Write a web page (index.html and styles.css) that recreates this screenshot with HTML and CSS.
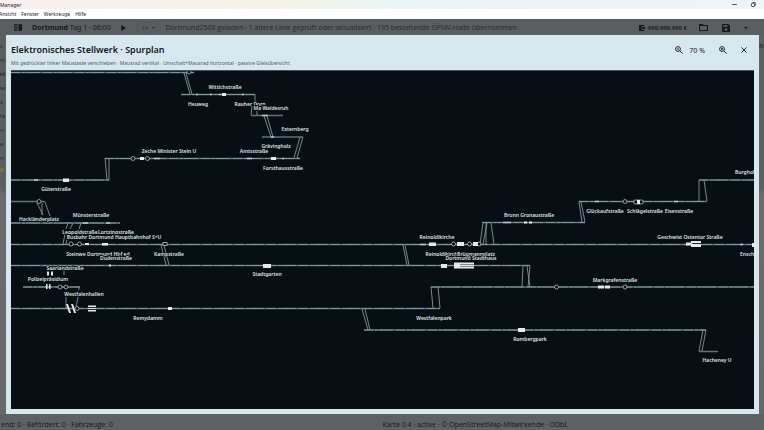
FILE: index.html
```html
<!DOCTYPE html>
<html lang="de">
<head>
  <meta charset="UTF-8" />
  <meta name="viewport" content="width=device-width, initial-scale=1.0" />
  <title>Manager</title>
  <link rel="stylesheet" href="styles.css">
</head>
<body>
  <header class="titlebar">
    <span class="app-name">Manager</span>
    <div class="window-buttons">
      <button type="button" aria-label="Minimieren">
        <svg width="5" height="5" viewBox="0 0 5 5"><path d="M0 2.5h5" /></svg>
      </button>
      <button type="button" aria-label="Wiederherstellen">
        <svg width="5" height="5" viewBox="0 0 5 5"><rect x="0.5" y="1.3" width="3" height="3.2" rx="0.6" /><path d="M1.6 0.5h2q1 0 1 1v2" /></svg>
      </button>
    </div>
  </header>

  <nav class="menubar">
    <a href="#">Ansicht</a>
    <a href="#">Fenster</a>
    <a href="#">Werkzeuge</a>
    <a href="#">Hilfe</a>
  </nav>

  <div class="app">
    <div class="toolbar">
      <button type="button" class="icon-button" aria-label="Seitenleiste">
        <svg width="8" height="7" viewBox="0 0 8 7"><path d="M0 0.2h3.4v1.6H0zM0 2.7h3.4v1.6H0zM0 5.2h3.4v1.6H0zM4.4 0.2H8v6.6H4.4z" /></svg>
      </button>
      <span class="city"><b>Dortmund</b> Tag 1 · 06:00</span>
      <button type="button" class="icon-button play" aria-label="Start">
        <svg width="5" height="6" viewBox="0 0 5 6"><path d="M0.3 0L5 3 0.3 6z" /></svg>
      </button>
      <button type="button" class="speed">1× <svg width="3" height="2" viewBox="0 0 3 2"><path d="M0 0h3L1.5 2z" /></svg></button>
      <span class="message">Dortmund2508 geladen · 1 ältere Linie geprüft oder aktualisiert · 195 bestehende ÖPNV-Halte übernommen</span>
      <span class="money">
        <svg width="6" height="6" viewBox="0 0 6 6"><path d="M0.6 0h4.5v1.1H2.6v3.6h2.5V6H0.6Q0 6 0 5.4V0.6Q0 0 0.6 0zM3.2 1.7H6v2.4H3.2z" /></svg>
        999.999.999 €
      </span>
      <button type="button" class="icon-button" aria-label="Öffnen">
        <svg width="9" height="7" viewBox="0 0 9 7"><path fill-rule="evenodd" d="M0 0h3.6l1 1H9v6H0zM1 2v4h7V2z" /></svg>
      </button>
      <button type="button" class="icon-button" aria-label="Speichern">
        <svg width="8" height="8" viewBox="0 0 8 8"><path fill-rule="evenodd" d="M0 0h6.2L8 1.8V8H0zM1.2 1.1v1.7h4.2V1.1zM4 4.1a1.4 1.4 0 1 0 .1 0z" /></svg>
      </button>
      <button type="button" class="icon-button" aria-label="Mehr">
        <svg width="4" height="2" viewBox="0 0 4 2"><path d="M0 0h4L2 2z" /></svg>
      </button>
    </div>
    <div class="map">
      <aside class="side">
        <span>z</span>
        <span>nz</span>
        <b>rt</b>
        <span>se</span>
        <span>s</span>
        <span>te</span>
        <span>n</span>
        <span>e</span>
        <span>n</span>
        <i class="coin"></i>
      </aside>
      <aside class="side">
        <span>Be</span>
      </aside>
    </div>
    <footer class="statusbar">
      <span>end: 0 · Befördert: 0 · Fahrzeuge: 0</span>
      <span>Karte 0.4 · active · © OpenStreetMap-Mitwirkende · ODbL</span>
    </footer>

    <section class="dialog" role="dialog" aria-labelledby="dialogTitle">
      <div class="dialog-head">
        <h1 id="dialogTitle">Elektronisches Stellwerk · Spurplan</h1>
        <div class="zoom-tools">
          <button type="button" aria-label="Verkleinern">
            <svg width="8" height="8" viewBox="0 0 8 8"><circle cx="3" cy="3" r="2.4" /><path d="M4.8 4.8L7.6 7.6M2 3h2" /></svg>
          </button>
          <span class="zoom-value">70 %</span>
          <button type="button" aria-label="Vergrößern">
            <svg width="8" height="8" viewBox="0 0 8 8"><circle cx="3" cy="3" r="2.4" /><path d="M4.8 4.8L7.6 7.6M2 3h2M3 2v2" /></svg>
          </button>
          <button type="button" aria-label="Schließen">
            <svg width="6" height="6" viewBox="0 0 6 6"><path d="M0.4 0.4l5.2 5.2M5.6 0.4L0.4 5.6" /></svg>
          </button>
        </div>
      </div>
      <p class="hint">Mit gedrückter linker Maustaste verschieben · Mausrad vertikal · Umschalt+Mausrad horizontal · passive Gleisübersicht</p>

      <svg class="plan" role="img" aria-label="Spurplan">
        <!-- canvas is panned to the current scroll position -->
        <g transform="translate(-11 -71)">
          <!-- tracks -->
          <path class="track" d="M11 72.5H194M181 94.5H255M251 115.5H283M262 137H303M105 158.5H300M11 180H109M11 201.5H45M11 223H120M11 244.5H754M11 265.5H530M23 287H80M431 287H754M11 308.5H440M364 330H706M699 351.500H718M482 222.500H585M579 201.500H707M699 180H754" />
          <path class="detail" d="M11 72.500H194M181 94.500H255M105 158.500H300M11 180H109M11 223H120M11 244.500H754M11 265.500H530M23 287H80M431 287H754M11 308.500H440M364 330H706M482 222.500H585M579 201.500H707M699 180H754" />

          <!-- connections between track rows -->
          <path class="link" d="M184 73l6 21M186 73l6 21M255 94v9M252 106l-1 9M257 111v4M264 116l7 21M267 116l6 21M300 137l-6 21M303 137l-6 21M105 158l2 22M109 158v22" />
          <path class="link" d="M37 203l6 12M42 203v12M45 202l5 14M68 223l-2 6M73 223l-3 6M81 223l-2 6M65 234l-2 10M68 235l-2 9M161 245l5 20M164 245l5 20M64 269v6M79 287v3M66 297v11M78 297l-2 11" />
          <path class="link" d="M403 245l4 20M405 245l4 20M483 223l-3 21M487 223l-4 21M486 223v21M491 223l3 21M523 266l-1 21M527 266l3 21M530 266l-2 21M431 287l2 21M438 287l2 21M362 309l6 21M365 309l5 21M579 202l3 20M581 202l4 20M699 180v21M704 180l3 21M703 330l-4 21M706 330l-4 21" />

          <!-- signals and switches -->
          <g class="node">
            <circle cx="189" cy="72" r="2" />
            <circle cx="133" cy="158.500" r="2" />
            <circle cx="147.500" cy="158.500" r="2" />
            <circle cx="39" cy="201.500" r="2" />
            <circle cx="71" cy="244" r="2" />
            <circle cx="79.500" cy="244" r="2" />
            <circle cx="60" cy="287" r="2" />
            <circle cx="66" cy="287" r="2" />
            <circle cx="77" cy="308.500" r="2" />
            <circle cx="453.500" cy="244" r="2" />
            <circle cx="469.500" cy="244" r="2" />
            <circle cx="479" cy="244" r="2" />
            <circle cx="556.500" cy="287" r="2" />
            <circle cx="625" cy="201.500" r="2" />
            <circle cx="625" cy="287" r="2" />
            <rect x="163" y="242.500" width="4" height="3" />
            <rect x="634" y="200" width="9" height="4" rx="1" />
          </g>

          <!-- platforms -->
          <path class="platform" d="M222 93h4v3h-4zM271 157h5v3h-5zM140 157h4v3h-4zM63 178.500h6v3.500h-6zM168 307h4v3h-4zM263 264h8v4h-8zM429 242.500h7v3.500h-7zM457 242h7v4h-7zM473 242h5v4h-5zM441 264h6v4h-6zM454 262.500h20v2h-20zM454 264h6v3h-6zM460 265h14v1h-14zM454 266.500h20v2h-20zM518 328h7v4h-7zM524 221.500h3v2h-3zM529 221.500h3v2h-3zM637 200h3v4h-3zM598 285.500h6v3h-6zM605 285.500h5v3h-5zM686 242.500h6v3h-6zM691 241h10v2h-10zM691 244h10v3h-10zM88 305.500h8v1.500h-8zM88 308h8v1h-8zM88 310h8v1.500h-8z" />
          <path class="platform" d="M47 271.500h2v4h-2zM51 271.500h2v4h-2zM46 284h1.500v5h-1.500zM49 284h1.500v5h-1.500zM66 304h2l3 9h-2zM71 304h2l3 9h-2zM85 243h4v2h-4zM102 243h6v2.500h-6zM109 264.500h2v2h-2zM752 243h2v4h-2z" />
          <path class="marks" d="M196 94.500h2M210 94.500h2M219 94.500h2M242 94.500h2M34 180h4M154 158.500h6M247 158.500h5M282 158.500h2M83 223h5M106 223h4M420 244.500h6M503 222.500h8M595 201.500h4M674 201.500h4M740 244.500h3M262 115.500h6M271 137h3" />

          <!-- station names -->
          <g class="names">
            <text x="225" y="89">Wittichstraße</text>
            <text x="198" y="106">Heuweg</text>
            <text x="250" y="106">Rauher Dorn</text>
            <text class="boxed" x="271" y="110">Ma Waldesruh</text>
            <text x="295" y="131">Externberg</text>
            <text x="276" y="148">Grävingholz</text>
            <text x="169" y="153">Zeche Minister Stein U</text>
            <text x="254" y="153">Amtsstraße</text>
            <text x="283" y="170">Forsthausstraße</text>
            <text x="56" y="191">Güterstraße</text>
            <text x="39" y="221">Hackländerplatz</text>
            <text x="91" y="217">Münsterstraße</text>
            <text x="80" y="234">Leopoldstraße</text>
            <text x="116" y="234">Lortzingstraße</text>
            <text class="boxed" x="114" y="239">Busbahr Dortmund Hauptbahnhof S+U</text>
            <text x="98" y="256">Steinwe Dortmund Hbf ed</text>
            <text class="boxed" x="116" y="260">Dudenstraße</text>
            <text x="169" y="256">Kampstraße</text>
            <text x="65" y="270">Saarlandstraße</text>
            <text x="48" y="281">Polizeipräsidium</text>
            <text x="84" y="296">Westfalenhallen</text>
            <text x="148" y="320">Remydamm</text>
            <text x="267" y="276">Stadtgarten</text>
            <text x="437" y="239">Reinoldikirche</text>
            <text x="443" y="256">Reinoldikirche</text>
            <text class="boxed" x="476" y="256">Brügmannplatz</text>
            <text x="471" y="260">Dortmund Stadthaus</text>
            <text x="529" y="217">Brunn Gronaustraße</text>
            <text x="605" y="213">Glückaufstraße</text>
            <text x="645" y="213">Schlägelstraße</text>
            <text x="679" y="213">Eisenstraße</text>
            <text class="from" x="735" y="174">Burgholz</text>
            <text x="690" y="239">Geschwist Ostentor Straße</text>
            <text class="from" x="740" y="256">Enscheder</text>
            <text x="615" y="282">Markgrafenstraße</text>
            <text x="434" y="320">Westfalenpark</text>
            <text x="530" y="341">Rombergpark</text>
            <text x="717" y="362">Hacheney U</text>
          </g>
        </g>
      </svg>
    </section>
  </div>
</body>
</html>
```

FILE: styles.css
```css
* {
  box-sizing: border-box;
}

body {
  margin: 0;
  height: 100vh;
  display: flex;
  flex-direction: column;
  overflow: hidden;
  font-family: "Noto Sans", "Open Sans", sans-serif;
  font-size: 6px;
  color: #1b2226;
}

button {
  display: flex;
  align-items: center;
  justify-content: center;
  padding: 0;
  border: none;
  background: none;
  color: inherit;
  font: inherit;
  cursor: pointer;
}

svg {
  display: block;
}

.titlebar {
  display: flex;
  align-items: center;
  justify-content: space-between;
  height: 9px;
  font-size: 5px;
  background: linear-gradient(90deg, #fbeef0, #f4f3e4 38%, #e8f6f5 50%, #ebf3f8 65%, #eef4fa);
}

.window-buttons {
  display: flex;
  gap: 14px;
  padding-right: 8px;
}

.window-buttons svg {
  fill: none;
  stroke: #30363a;
  stroke-width: 0.8;
}

.menubar {
  display: flex;
  align-items: center;
  gap: 5px;
  height: 10px;
  margin-left: -1px;
  background: #fff;
  font-size: 5px;
}

.menubar a {
  color: #15191c;
  text-decoration: none;
}

.app {
  position: relative;
  flex: 1;
  display: flex;
  flex-direction: column;
  background: #5b6063;
}

.toolbar {
  display: flex;
  align-items: center;
  height: 17px;
  padding: 0 16px 0 14px;
  font-size: 7px;
  color: #14191c;
  background: #595e61;
}

.toolbar svg {
  fill: currentColor;
}

.city {
  margin-left: 10px;
}

.play {
  margin-left: 10px;
}

.speed {
  gap: 3px;
  height: 11px;
  margin: 0 5px 0 10px;
  padding: 0 5px;
  border: 1px solid #53595c;
  border-radius: 6px;
  font-size: 6px;
  color: #23292c;
}

.message {
  flex: 1;
  font-family: "Open Sans", sans-serif;
  color: #23292c;
  white-space: nowrap;
}

.money {
  display: flex;
  align-items: center;
  gap: 3px;
  margin-right: 12px;
  font-size: 6px;
  font-weight: 600;
}

.toolbar .icon-button + .icon-button {
  margin-left: 14px;
}

.map {
  flex: 1;
  display: flex;
  justify-content: space-between;
  background: linear-gradient(#5b6063 40%, #6b6b69 42%, #65686a);
}

.side {
  display: flex;
  flex-direction: column;
  gap: 6px;
  width: 5px;
  padding-top: 6px;
  overflow: hidden;
  line-height: 8px;
  color: #23292c;
}

.coin {
  width: 4px;
  height: 4px;
  border-radius: 2px;
  background: #8d7136;
}

.statusbar {
  display: grid;
  grid-template-columns: 1fr 1fr;
  align-items: center;
  height: 16px;
  padding-left: 1px;
  padding-top: 6px;
  font-family: "Open Sans", sans-serif;
  font-size: 7px;
  line-height: 10px;
  color: #15191b;
  background: #5d6163;
}

.dialog {
  position: absolute;
  inset: 16px 5px 16px 6px;
  display: flex;
  flex-direction: column;
  padding: 8px 5px 5px;
  background: #d7e7ee;
}

.dialog-head {
  display: flex;
  align-items: center;
  justify-content: space-between;
  height: 14px;
}

h1 {
  margin: 0;
  font-size: 9px;
  font-weight: 600;
  line-height: 14px;
  color: #10171b;
}

.zoom-tools {
  display: flex;
  align-items: center;
  padding-right: 7px;
  font-size: 7px;
}

.zoom-tools button {
  margin-left: 14px;
}

.zoom-tools svg {
  fill: none;
  stroke: #1b2429;
  stroke-width: 1;
}

.zoom-value {
  margin-left: 6px;
}

.hint {
  margin: 3px 0;
  font-size: 5px;
  line-height: 7px;
  color: #4f5e66;
}

.plan {
  flex: 1;
  width: 100%;
  min-height: 0;
  background: #070e14;
  border-top: 1px solid #45525a;
}

.track {
  fill: none;
  stroke: #5d737b;
  stroke-width: 1.4;
}

.detail {
  fill: none;
  stroke: #91a7ae;
  stroke-width: 0.7;
  stroke-dasharray: 9 2 3 1 14 3;
}

.link {
  fill: none;
  stroke: #84959c;
  stroke-width: 0.9;
}

.node {
  fill: #070e14;
  stroke: #aebbc0;
  stroke-width: 0.8;
}

.platform {
  fill: #e4eaec;
}

.marks {
  stroke: #b9c8cd;
  stroke-width: 1.6;
}

.names {
  font-size: 5px;
  font-weight: 600;
  fill: #dfe5e8;
  text-anchor: middle;
}

.names text {
  stroke: #070e14;
  stroke-width: 1;
  paint-order: stroke;
}

.names .boxed {
  stroke-width: 2;
}

.names .from {
  text-anchor: start;
}
```
